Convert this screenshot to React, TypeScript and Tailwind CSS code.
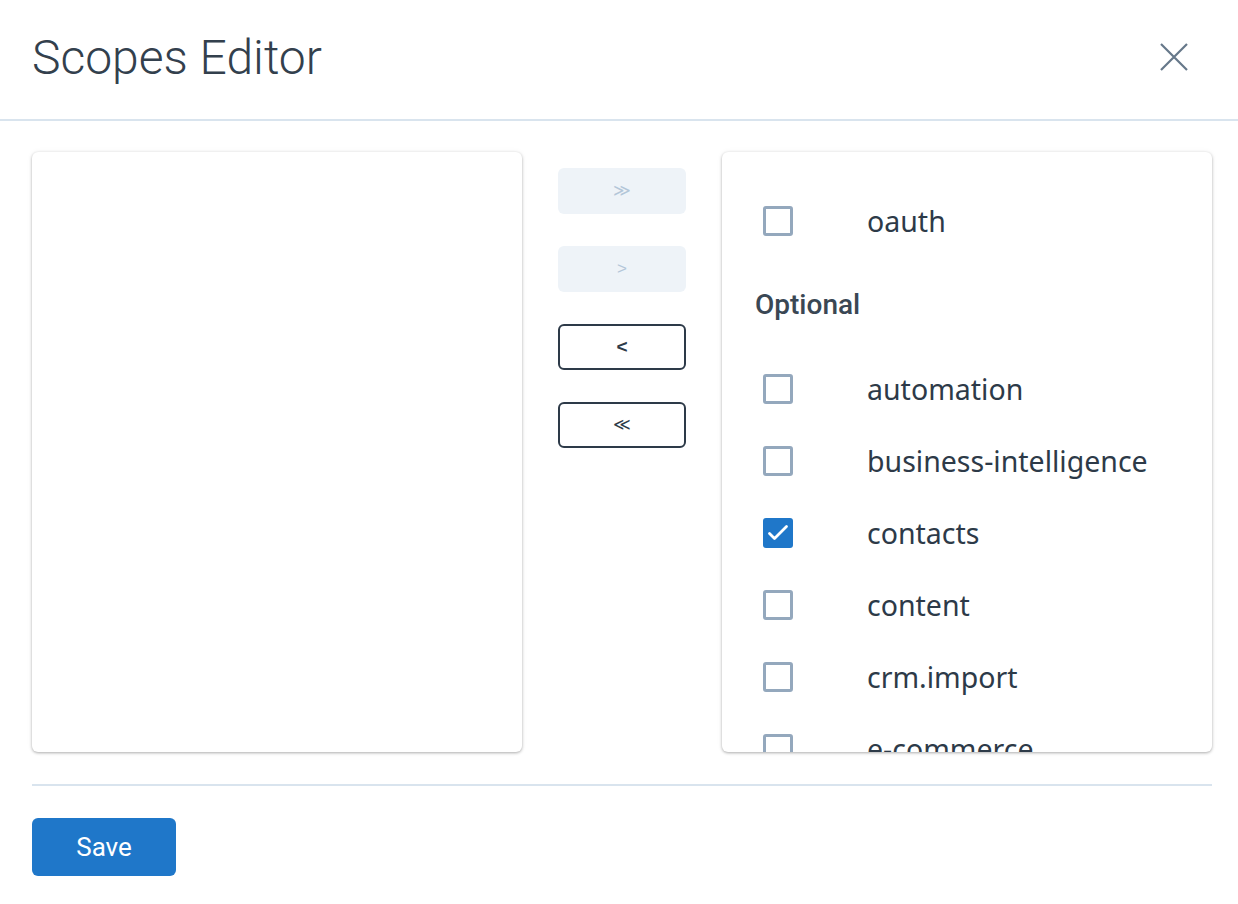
import * as React from 'react';

const requiredScopes = ['oauth'];
const optionalScopes = [
  'automation',
  'business-intelligence',
  'contacts',
  'content',
  'crm.import',
  'e-commerce',
  'files',
];

function Checkbox({ checked }: { checked?: boolean }) {
  if (checked) {
    return (
      <span className="flex h-[30px] w-[30px] shrink-0 items-center justify-center rounded-[3px] bg-[#1f77c9]">
        <svg width="24" height="24" viewBox="0 0 24 24" fill="none">
          <path d="M3.5 12.5l5 5L20.5 5.5" stroke="#fff" strokeWidth="2.8" strokeLinecap="round" strokeLinejoin="round" />
        </svg>
      </span>
    );
  }
  return <span className="block h-[30px] w-[30px] shrink-0 rounded-[3px] border-[3px] border-[#94a8bd] bg-white" />;
}

function ScopeRow({ name, checked }: { name: string; checked?: boolean }) {
  return (
    <div className="flex h-[72px] shrink-0 items-center pl-2">
      <Checkbox checked={checked} />
      <span className="ml-[74px] whitespace-nowrap font-['Noto_Sans',sans-serif] text-[28.5px] text-[#2d3a48]">{name}</span>
    </div>
  );
}

function MoveButton({ label, disabled, bold }: { label: string; disabled?: boolean; bold?: boolean }) {
  const weight = bold ? 'font-bold text-[19px]' : 'font-normal text-[17px]';
  return (
    <button
      className={
        disabled
          ? `flex h-[46px] w-[128px] items-center justify-center rounded-[6px] bg-[#eef3f8] font-['Liberation_Sans',sans-serif] text-[#b3c6d8] ${weight}`
          : `flex h-[46px] w-[128px] items-center justify-center rounded-[6px] border-2 border-[#2d3a48] bg-white font-['Liberation_Sans',sans-serif] text-[#2d3a48] ${weight}`
      }
    >
      {label}
    </button>
  );
}

export default function App() {
  return (
    <div className="h-[904px] w-full bg-white font-['Roboto',sans-serif]">
      <div className="flex h-[121px] items-center justify-between border-b-2 border-[#d9e4ee] pl-8 pr-[50px]">
        <h1 className="mb-[4px] text-[48px] font-light text-[#33404d]">Scopes Editor</h1>
        <button className="mb-[6px] text-[#66788a]">
          <svg width="28" height="28" viewBox="0 0 28 28" fill="none">
            <path d="M1 1l26 26M27 1L1 27" stroke="currentColor" strokeWidth="2.2" />
          </svg>
        </button>
      </div>

      <div className="w-[1212px] pl-8 pt-[31px]">
        <div className="flex gap-9">
          <div className="h-[600px] w-[490px] shrink-0 rounded-[6px] bg-white shadow-[0_1px_3px_rgba(0,0,0,0.3),0_0_6px_rgba(0,0,0,0.05)]" />

          <div className="flex w-[128px] shrink-0 flex-col gap-8 pt-4">
            <MoveButton label="≫" disabled />
            <MoveButton label=">" disabled />
            <MoveButton label="<" bold />
            <MoveButton label="≪" />
          </div>

          <div className="flex h-[600px] w-[490px] shrink-0 flex-col overflow-hidden rounded-[6px] bg-white pl-[33px] pt-[33px] shadow-[0_1px_3px_rgba(0,0,0,0.3),0_0_6px_rgba(0,0,0,0.05)]">
            {requiredScopes.map((s) => (
              <ScopeRow key={s} name={s} />
            ))}
            <div className="flex h-[96px] shrink-0 items-center text-[28px] font-medium text-[#3a4754]">Optional</div>
            {optionalScopes.map((s) => (
              <ScopeRow key={s} name={s} checked={s === 'contacts'} />
            ))}
          </div>
        </div>

        <div className="mt-[32px] border-t-2 border-[#d9e4ee]" />

        <button className="mt-[32px] flex h-[58px] w-[144px] items-center justify-center rounded-[6px] bg-[#1f77c9] text-[26px] text-white">
          Save
        </button>
      </div>
    </div>
  );
}
